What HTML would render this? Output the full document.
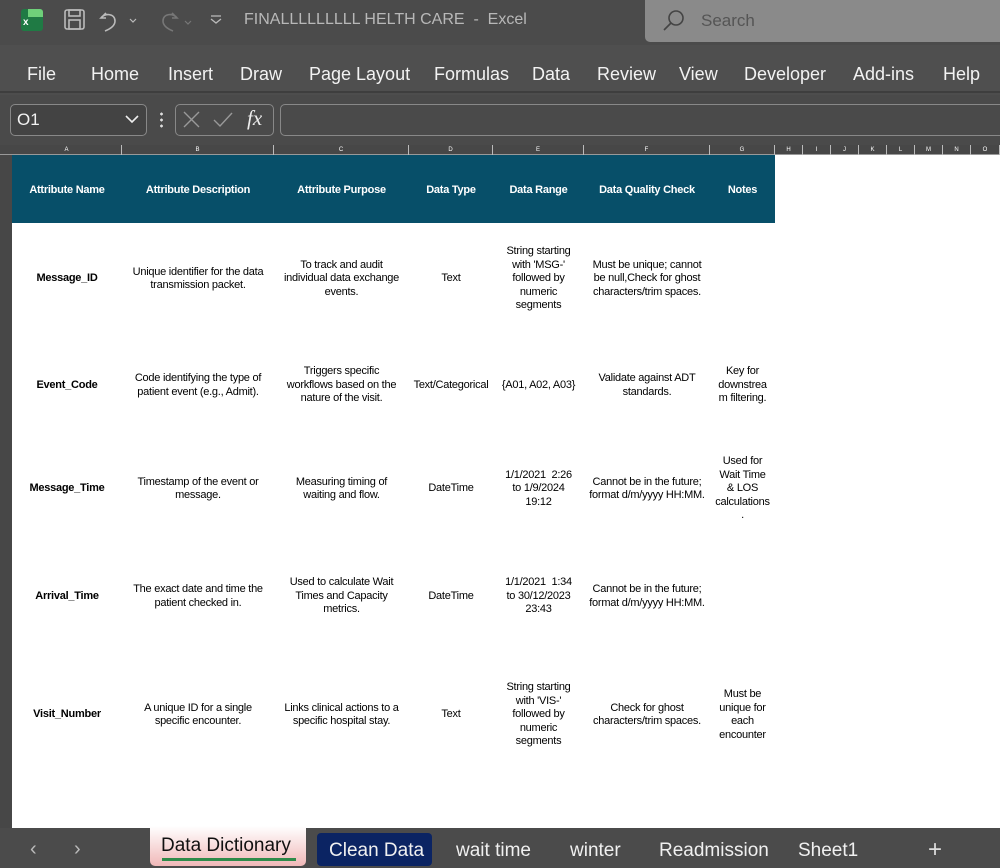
<!DOCTYPE html>
<html><head><style>
*{margin:0;padding:0;box-sizing:border-box}
body{width:1000px;height:868px;overflow:hidden;background:#4d4d4d;font-family:"Liberation Sans",Arial,sans-serif;position:relative;color:#fff}
.abs{position:absolute}
.menu span{position:absolute;top:64px;font-size:18px;color:#f2f2f2}
table{border-collapse:collapse;table-layout:fixed;position:absolute;left:12px;top:155px;background:#fff}
td{font-size:11px;letter-spacing:-0.25px;color:#000;text-align:center;vertical-align:middle;line-height:13.5px;padding:4px 4px 0;overflow:hidden}
td.c{padding:4px 7px 0}
tr.h td{background:#074f69;color:#fff;font-weight:bold;font-size:11px}
td.b{font-weight:bold}
.colh{position:absolute;top:145px;height:10px;font-size:6px;color:#fff;text-align:center;border-right:1px solid #bbb;line-height:10px}
.tab{position:absolute;top:840px;font-size:19px;color:#f0f0f0}
</style></head><body>
<div class="abs" style="left:0;top:0;width:1000px;height:45px;background:#4b4b4b"></div>
<div class="abs" style="left:21px;top:9px;width:22px;height:22px;background:#1f7a44;border-radius:3px"></div>
<div class="abs" style="left:28px;top:9px;width:15px;height:8px;background:#6fd07a;border-radius:0 3px 0 0"></div>
<div class="abs" style="left:23px;top:17px;font-size:10px;font-weight:bold;color:#fff">x</div>
<svg class="abs" style="left:62px;top:7px" width="100" height="26" viewBox="0 0 100 26" fill="none" stroke="#bbb" stroke-width="1.6">
<rect x="3" y="3" width="19" height="19" rx="2"/><rect x="7" y="3" width="11" height="6"/><rect x="7" y="13" width="11" height="9"/>
<path d="M44 6 l-5 5 l5 0 M39 11 c3 -5 14 -5 14 3 c0 5 -5 8 -10 10"/><path d="M68 12 l3 3 l3 -3" stroke-width="1.2"/>
</svg>
<svg class="abs" style="left:155px;top:7px" width="80" height="26" fill="none" stroke="#777" stroke-width="1.6"><path d="M17 6 l5 5 l-5 0 M22 11 c-3 -5 -14 -5 -14 3 c0 5 5 8 10 10"/><path d="M30 14 l3 3 l3 -3" stroke-width="1.2"/><path d="M56 12 l5 4 l5 -4 M56 9 h10" stroke="#bbb" stroke-width="1.3"/></svg>
<div class="abs" style="left:244px;top:11px;font-size:16px;color:#b8b8b8">FINALLLLLLLLL HELTH CARE&nbsp; - &nbsp;Excel</div>
<div class="abs" style="left:645px;top:0;width:360px;height:42px;background:#8a8a8a;border-radius:0 0 0 5px"></div>
<svg class="abs" style="left:662px;top:8px" width="24" height="24" fill="none" stroke="#444" stroke-width="1.6"><circle cx="14" cy="10" r="7"/><path d="M9 15 l-7 7"/></svg>
<div class="abs" style="left:701px;top:11px;font-size:17px;color:#555">Search</div>
<div class="abs" style="left:0;top:45px;width:1000px;height:48px;background:#4f4f4f;border-bottom:2px solid #3e3e3e"></div>
<div class="menu"><span style="left:27px">File</span><span style="left:91px">Home</span><span style="left:168px">Insert</span><span style="left:240px">Draw</span><span style="left:309px">Page Layout</span><span style="left:434px">Formulas</span><span style="left:532px">Data</span><span style="left:597px">Review</span><span style="left:679px">View</span><span style="left:744px">Developer</span><span style="left:853px">Add-ins</span><span style="left:943px">Help</span></div>
<div class="abs" style="left:0;top:95px;width:1000px;height:50px;background:#4a4a4a"></div>
<div class="abs" style="left:10px;top:104px;width:137px;height:32px;border:1px solid #888;border-radius:5px;background:#434343"></div>
<div class="abs" style="left:17px;top:110px;font-size:17px;color:#f2f2f2">O1</div>
<svg class="abs" style="left:125px;top:114px" width="14" height="10" fill="none" stroke="#eee" stroke-width="1.6"><path d="M1 2 l6 6 l6 -6"/></svg>
<div class="abs" style="left:160px;top:111px;width:3px;height:18px;background:radial-gradient(circle,#ddd 1.3px,transparent 1.5px) 0 0/3px 6px"></div>
<div class="abs" style="left:175px;top:104px;width:99px;height:32px;border:1px solid #888;border-radius:5px"></div>
<svg class="abs" style="left:182px;top:110px" width="60" height="20" fill="none" stroke="#999" stroke-width="1.4"><path d="M2 2 l15 15 M17 2 l-15 15"/><path d="M32 10 l6 6 l12 -13"/></svg>
<div class="abs" style="left:247px;top:106px;font-size:21px;font-style:italic;font-family:'Liberation Serif',serif;color:#eee">fx</div>
<div class="abs" style="left:280px;top:104px;width:730px;height:32px;border:1px solid #888;border-radius:5px"></div>
<div class="abs" style="left:0;top:145px;width:1000px;height:10px;background:#474747;border-bottom:1px solid #999"></div>
<div class="colh" style="left:12px;width:110px">A</div><div class="colh" style="left:122px;width:152px">B</div><div class="colh" style="left:274px;width:135px">C</div><div class="colh" style="left:409px;width:84px">D</div><div class="colh" style="left:493px;width:91px">E</div><div class="colh" style="left:584px;width:126px">F</div><div class="colh" style="left:710px;width:65px">G</div><div class="colh" style="left:775px;width:28px">H</div><div class="colh" style="left:803px;width:28px">I</div><div class="colh" style="left:831px;width:28px">J</div><div class="colh" style="left:859px;width:28px">K</div><div class="colh" style="left:887px;width:28px">L</div><div class="colh" style="left:915px;width:28px">M</div><div class="colh" style="left:943px;width:28px">N</div><div class="colh" style="left:971px;width:29px">O</div>
<div class="abs" style="left:0;top:155px;width:12px;height:673px;background:#474747"></div>
<div class="abs" style="left:12px;top:155px;width:988px;height:673px;background:#fff"></div>
<table>
<colgroup><col style="width:110px"><col style="width:152px"><col style="width:135px"><col style="width:84px"><col style="width:91px"><col style="width:126px"><col style="width:65px"></colgroup>
<tr class="h" style="height:68px"><td>Attribute Name</td><td>Attribute Description</td><td>Attribute Purpose</td><td>Data Type</td><td>Data Range</td><td>Data Quality Check</td><td>Notes</td></tr>
<tr style="height:108px"><td class="b">Message_ID</td><td>Unique identifier for the data transmission packet.</td><td class="c">To track and audit individual data exchange events.</td><td>Text</td><td style="padding:4px 8px 0">String starting with 'MSG-' followed by numeric segments</td><td>Must be unique; cannot be null,Check for ghost characters/trim spaces.</td><td></td></tr>
<tr style="height:105px"><td class="b">Event_Code</td><td>Code identifying the type of patient event (e.g., Admit).</td><td class="c">Triggers specific workflows based on the nature of the visit.</td><td style="padding:4px 0 0">Text/Categorical</td><td style="padding:4px 0 0">{A01, A02, A03}</td><td>Validate against ADT standards.</td><td>Key for downstrea m filtering.</td></tr>
<tr style="height:102px"><td class="b">Message_Time</td><td>Timestamp of the event or message.</td><td class="c" style="padding:4px 12px 0">Measuring timing of waiting and flow.</td><td>DateTime</td><td style="padding:4px 8px 0">1/1/2021&nbsp; 2:26 to 1/9/2024 19:12</td><td style="padding:4px 2px 0">Cannot be in the future; format d/m/yyyy HH:MM.</td><td style="padding:4px 5px 0">Used for Wait Time &amp; LOS calculations .</td></tr>
<tr style="height:113px"><td class="b">Arrival_Time</td><td>The exact date and time the patient checked in.</td><td class="c">Used to calculate Wait Times and Capacity metrics.</td><td>DateTime</td><td style="padding:4px 9px 0">1/1/2021&nbsp; 1:34 to 30/12/2023 23:43</td><td style="padding:4px 2px 0">Cannot be in the future; format d/m/yyyy HH:MM.</td><td></td></tr>
<tr style="height:124px"><td class="b">Visit_Number</td><td>A unique ID for a single specific encounter.</td><td>Links clinical actions to a specific hospital stay.</td><td>Text</td><td style="padding:4px 8px 0">String starting with 'VIS-' followed by numeric segments</td><td>Check for ghost characters/trim spaces.</td><td>Must be unique for each encounter</td></tr>
</table>
<div class="abs" style="left:0;top:828px;width:1000px;height:40px;background:#4b4b4b"></div>
<div class="abs" style="left:30px;top:838px;font-size:20px;color:#bbb">&#8249;</div>
<div class="abs" style="left:74px;top:838px;font-size:20px;color:#bbb">&#8250;</div>
<div class="abs" style="left:150px;top:826px;width:156px;height:40px;border-radius:0 0 5px 5px;background:linear-gradient(#fff,#f0b8b8)"></div>
<div class="abs" style="left:161px;top:835px;font-size:19px;color:#111">Data Dictionary</div>
<div class="abs" style="left:162px;top:858px;width:134px;height:3px;background:#2e8b4a"></div>
<div class="abs" style="left:317px;top:833px;width:115px;height:33px;background:#0b2463;border-radius:4px"></div>
<div class="tab" style="left:329px">Clean Data</div>
<div class="tab" style="left:456px">wait time</div>
<div class="tab" style="left:570px">winter</div>
<div class="tab" style="left:659px">Readmission</div>
<div class="tab" style="left:798px">Sheet1</div>
<div class="abs" style="left:928px;top:836px;font-size:24px;color:#ddd">+</div>
</body></html>
